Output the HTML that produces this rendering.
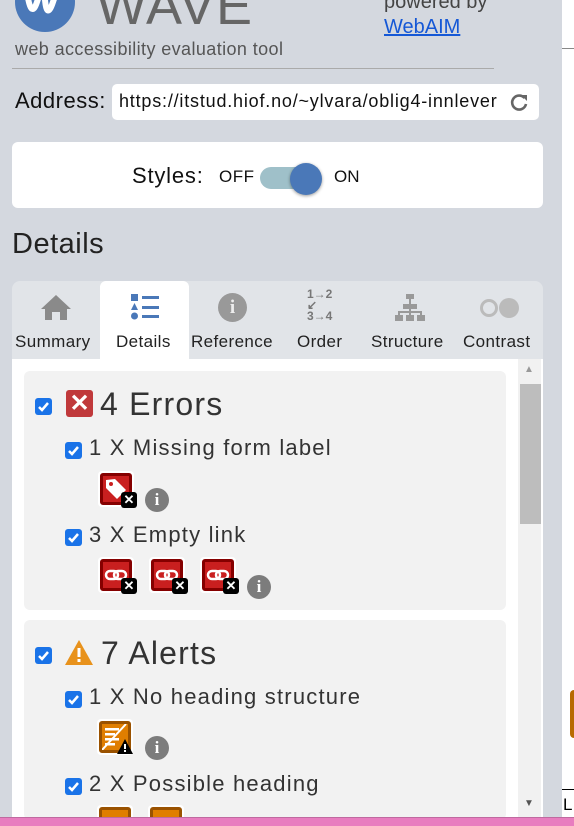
<!DOCTYPE html>
<html><head><meta charset="utf-8"><style>
*{box-sizing:border-box;margin:0;padding:0}
body{width:574px;height:826px;overflow:hidden;background:#fff;font-family:"Liberation Sans",sans-serif;position:relative}
.a{position:absolute}
#panel{left:0;top:0;width:562px;height:817px;background:#d4d8df;overflow:hidden}
.cb{position:absolute;width:17px;height:17px;border-radius:3px;background:#1a73e8}
.cb svg{position:absolute;left:2px;top:2px}
.t{position:absolute;color:#333;white-space:nowrap}
.ic{position:absolute;width:36px;height:36px;background:#fff;border-radius:4px}
.ic .r{position:absolute;left:2px;top:2px;width:32px;height:32px;border:3px solid #850000;background:#c91f1f;border-radius:3px}
.ic .o{position:absolute;left:2px;top:2px;width:32px;height:32px;border:3px solid #9a5200;background:#e07e00;border-radius:3px}
.ic .x{position:absolute;left:23px;top:21px;width:16px;height:16px;background:#000;border-radius:3px;color:#fff;font-size:13px;font-weight:bold;text-align:center;line-height:16px}
.info{position:absolute;width:24px;height:24px;border-radius:50%;background:#7c7c7c;color:#fff;font-weight:bold;font-size:17px;text-align:center;line-height:24px;font-family:"Liberation Serif",serif}
.tab{position:absolute;top:332px;font-size:17px;color:#222;letter-spacing:0.4px}
.it{font-size:22px;letter-spacing:1.2px}
</style></head><body>
<div class="a" style="left:562px;top:48px;width:12px;height:1px;background:#888"></div>
<div class="a" style="left:570px;top:690px;width:4px;height:48px;background:#b86a00;border-radius:4px 0 0 4px"></div>
<div class="a" style="left:562px;top:789px;width:12px;height:1px;background:#000"></div>
<div class="t" style="left:563px;top:795px;font-size:17px;color:#000">L</div>
<div id="panel" class="a">
  <div class="a" style="left:15px;top:-28px;width:60px;height:60px;border-radius:50%;background:#4a78b8;overflow:hidden">
    <svg width="60" height="60"><path d="M12 20 Q16 48 22 30 Q28 12 30 28 Q32 48 38 30 Q44 12 48 20" stroke="#fff" stroke-width="6" fill="none"/></svg>
  </div>
  <div class="t" style="left:96px;top:-25px;font-size:54px;color:#666;letter-spacing:1px">WAVE</div>
  <div class="t" style="left:15px;top:39px;font-size:18px;color:#555;letter-spacing:0.4px">web accessibility evaluation tool</div>
  <div class="t" style="left:384px;top:-9px;font-size:20px;color:#444">powered by</div>
  <div class="t" style="left:384px;top:16px;font-size:20px;color:#1558d6;text-decoration:underline">WebAIM</div>
  <div class="a" style="left:12px;top:68px;width:482px;height:1px;background:#aaa"></div>
  <div class="t" style="left:15px;top:88px;font-size:22px;color:#111;letter-spacing:0.5px">Address:</div>
  <div class="a" style="left:112px;top:84px;width:427px;height:36px;background:#fff;border-radius:5px"></div>
  <div class="t" style="left:119px;top:91px;font-size:18px;color:#111;letter-spacing:0.8px">https://itstud.hiof.no/~ylvara/oblig4-innlever</div>
  <svg class="a" style="left:509px;top:92px" width="20" height="20"><path d="M15.5 6 A7 7 0 1 0 17 12" stroke="#666" stroke-width="2.6" fill="none"/><path d="M12 3 L18 3 L18 9 Z" fill="#666"/></svg>
  <div class="a" style="left:12px;top:142px;width:531px;height:66px;background:#fff;border-radius:6px"></div>
  <div class="t" style="left:132px;top:163px;font-size:22px;color:#111;letter-spacing:0.8px">Styles:</div>
  <div class="t" style="left:219px;top:167px;font-size:17px;color:#111;letter-spacing:0.5px">OFF</div>
  <div class="a" style="left:260px;top:167px;width:50px;height:22px;border-radius:11px;background:#9fc0c9"></div>
  <div class="a" style="left:290px;top:163px;width:32px;height:32px;border-radius:50%;background:#4a78b8;box-shadow:0 1px 3px rgba(0,0,0,.4)"></div>
  <div class="t" style="left:334px;top:167px;font-size:17px;color:#111">ON</div>
  <div class="t" style="left:12px;top:228px;font-size:29px;color:#222;letter-spacing:0.5px">Details</div>
  <div class="a" style="left:12px;top:281px;width:531px;height:536px;background:#e1e4e8;border-radius:8px 8px 0 0"></div>
  <div class="a" style="left:100px;top:281px;width:89px;height:80px;background:#fff;border-radius:6px 6px 0 0"></div>
  <svg class="a" style="left:40px;top:293px" width="32" height="28"><path d="M16 2 L31 16 H27 V27 H20 V19 H12 V27 H5 V16 H1 Z" fill="#8a8a8a"/></svg>
  <svg class="a" style="left:130px;top:293px" width="30" height="28"><rect x="1" y="1" width="7" height="7" fill="#4a78b8"/><rect x="12" y="3" width="17" height="3" fill="#4a78b8"/><path d="M4.5 10 L8 17 H1 Z" fill="#4a78b8"/><rect x="12" y="13" width="17" height="3" fill="#4a78b8"/><circle cx="4.5" cy="23" r="3.5" fill="#4a78b8"/><rect x="12" y="22" width="17" height="3" fill="#4a78b8"/></svg>
  <div class="a" style="left:218px;top:293px;width:29px;height:29px;border-radius:50%;background:#999;color:#eee;font-weight:bold;text-align:center;line-height:29px;font-size:19px;font-family:'Liberation Serif',serif">i</div>
  <div class="t" style="left:307px;top:289px;font-size:12px;color:#777;font-weight:bold;line-height:11px">1&#x2192;2<br>&#x2199;<br>3&#x2192;4</div>
  <svg class="a" style="left:394px;top:293px" width="32" height="30"><g fill="#999"><rect x="12" y="1" width="8" height="5"/><rect x="9" y="11" width="14" height="5"/><rect x="1" y="22" width="8" height="6"/><rect x="12" y="22" width="8" height="6"/><rect x="23" y="22" width="8" height="6"/><rect x="15" y="6" width="2" height="16"/><rect x="4" y="18" width="24" height="2"/><rect x="4" y="18" width="2" height="4"/><rect x="26" y="18" width="2" height="4"/></g></svg>
  <div class="a" style="left:480px;top:299px;width:18px;height:18px;border-radius:50%;border:3px solid #bbb"></div>
  <div class="a" style="left:499px;top:298px;width:20px;height:20px;border-radius:50%;background:#bbb"></div>
  <div class="tab" style="left:15px">Summary</div>
  <div class="tab" style="left:116px">Details</div>
  <div class="tab" style="left:191px">Reference</div>
  <div class="tab" style="left:297px">Order</div>
  <div class="tab" style="left:371px">Structure</div>
  <div class="tab" style="left:463px">Contrast</div>
  <div class="a" style="left:12px;top:359px;width:531px;height:458px;background:#fff"></div>
  <div class="a" style="left:518px;top:359px;width:23px;height:458px;background:#f1f1f1"></div>
  <div class="a" style="left:520px;top:384px;width:21px;height:140px;background:#bdbdbd"></div>
  <div class="t" style="left:524px;top:364px;font-size:10px;color:#999">&#x25B2;</div>
  <div class="t" style="left:524px;top:798px;font-size:10px;color:#555">&#x25BC;</div>
  <div class="a" style="left:24px;top:371px;width:482px;height:239px;background:#f2f2f2;border-radius:6px"></div>
  <div class="a" style="left:24px;top:620px;width:482px;height:200px;background:#f2f2f2;border-radius:6px"></div>

  <div class="cb" style="left:35px;top:398px"><svg width="13" height="13"><path d="M2 7 L5 10 L11 3" stroke="#fff" stroke-width="2.5" fill="none"/></svg></div>
  <div class="a" style="left:66px;top:390px;width:27px;height:27px;background:#c0393b;border-radius:3px;color:#fff;font-size:24px;font-weight:bold;text-align:center;line-height:27px">&#x2715;</div>
  <div class="t" style="left:100px;top:386px;font-size:32px;letter-spacing:1.2px">4 Errors</div>
  <div class="cb" style="left:65px;top:442px"><svg width="13" height="13"><path d="M2 7 L5 10 L11 3" stroke="#fff" stroke-width="2.5" fill="none"/></svg></div>
  <div class="t it" style="left:89px;top:435px">1 X Missing form label</div>
  <div class="ic" style="left:98px;top:471px"><div class="r"><svg width="26" height="26"><path d="M3 4 L12 3 L23 14 L14 23 L3 12 Z" fill="#fff"/><circle cx="8" cy="8" r="2" fill="#c91f1f"/></svg></div><div class="x">&#x2715;</div></div>
  <div class="info" style="left:145px;top:488px">i</div>
  <div class="cb" style="left:65px;top:529px"><svg width="13" height="13"><path d="M2 7 L5 10 L11 3" stroke="#fff" stroke-width="2.5" fill="none"/></svg></div>
  <div class="t it" style="left:89px;top:522px">3 X Empty link</div>
  <div class="ic" style="left:98px;top:557px"><div class="r"><svg width="26" height="26"><rect x="3" y="9" width="12" height="8" rx="4" stroke="#fff" stroke-width="2.5" fill="none"/><rect x="11" y="9" width="12" height="8" rx="4" stroke="#fff" stroke-width="2.5" fill="none"/></svg></div><div class="x">&#x2715;</div></div>
  <div class="ic" style="left:149px;top:557px"><div class="r"><svg width="26" height="26"><rect x="3" y="9" width="12" height="8" rx="4" stroke="#fff" stroke-width="2.5" fill="none"/><rect x="11" y="9" width="12" height="8" rx="4" stroke="#fff" stroke-width="2.5" fill="none"/></svg></div><div class="x">&#x2715;</div></div>
  <div class="ic" style="left:200px;top:557px"><div class="r"><svg width="26" height="26"><rect x="3" y="9" width="12" height="8" rx="4" stroke="#fff" stroke-width="2.5" fill="none"/><rect x="11" y="9" width="12" height="8" rx="4" stroke="#fff" stroke-width="2.5" fill="none"/></svg></div><div class="x">&#x2715;</div></div>
  <div class="info" style="left:247px;top:575px">i</div>

  <div class="cb" style="left:35px;top:647px"><svg width="13" height="13"><path d="M2 7 L5 10 L11 3" stroke="#fff" stroke-width="2.5" fill="none"/></svg></div>
  <svg class="a" style="left:64px;top:638px" width="30" height="28"><path d="M15 2 L29 27 H1 Z" fill="#e8921c"/><rect x="13.5" y="10" width="3" height="9" fill="#fff"/><rect x="13.5" y="21" width="3" height="3" fill="#fff"/></svg>
  <div class="t" style="left:101px;top:635px;font-size:32px;letter-spacing:1.2px">7 Alerts</div>
  <div class="cb" style="left:65px;top:691px"><svg width="13" height="13"><path d="M2 7 L5 10 L11 3" stroke="#fff" stroke-width="2.5" fill="none"/></svg></div>
  <div class="t it" style="left:89px;top:684px">1 X No heading structure</div>
  <div class="ic" style="left:97px;top:719px"><div class="o"><svg width="26" height="26"><g fill="#fff"><rect x="3" y="4" width="14" height="2.5"/><rect x="3" y="9" width="10" height="2.5"/><rect x="3" y="14" width="14" height="2.5"/><rect x="3" y="19" width="10" height="2.5"/></g><path d="M24 0 L0 26" stroke="#fff" stroke-width="2"/></svg></div>
  <svg class="a" style="left:19px;top:19px" width="18" height="17"><path d="M9 1 L17 16 H1 Z" fill="#000"/><rect x="8" y="6" width="2" height="5" fill="#fff"/><rect x="8" y="12" width="2" height="2" fill="#fff"/></svg></div>
  <div class="info" style="left:145px;top:736px">i</div>
  <div class="cb" style="left:65px;top:778px"><svg width="13" height="13"><path d="M2 7 L5 10 L11 3" stroke="#fff" stroke-width="2.5" fill="none"/></svg></div>
  <div class="t it" style="left:89px;top:771px">2 X Possible heading</div>
  <div class="ic" style="left:97px;top:805px"><div class="o"></div></div>
  <div class="ic" style="left:148px;top:805px"><div class="o"></div></div>
</div>
<div class="a" style="left:0;top:817px;width:574px;height:9px;background:#e87dbf;border-top:1px solid #c06aa0"></div>
</body></html>
